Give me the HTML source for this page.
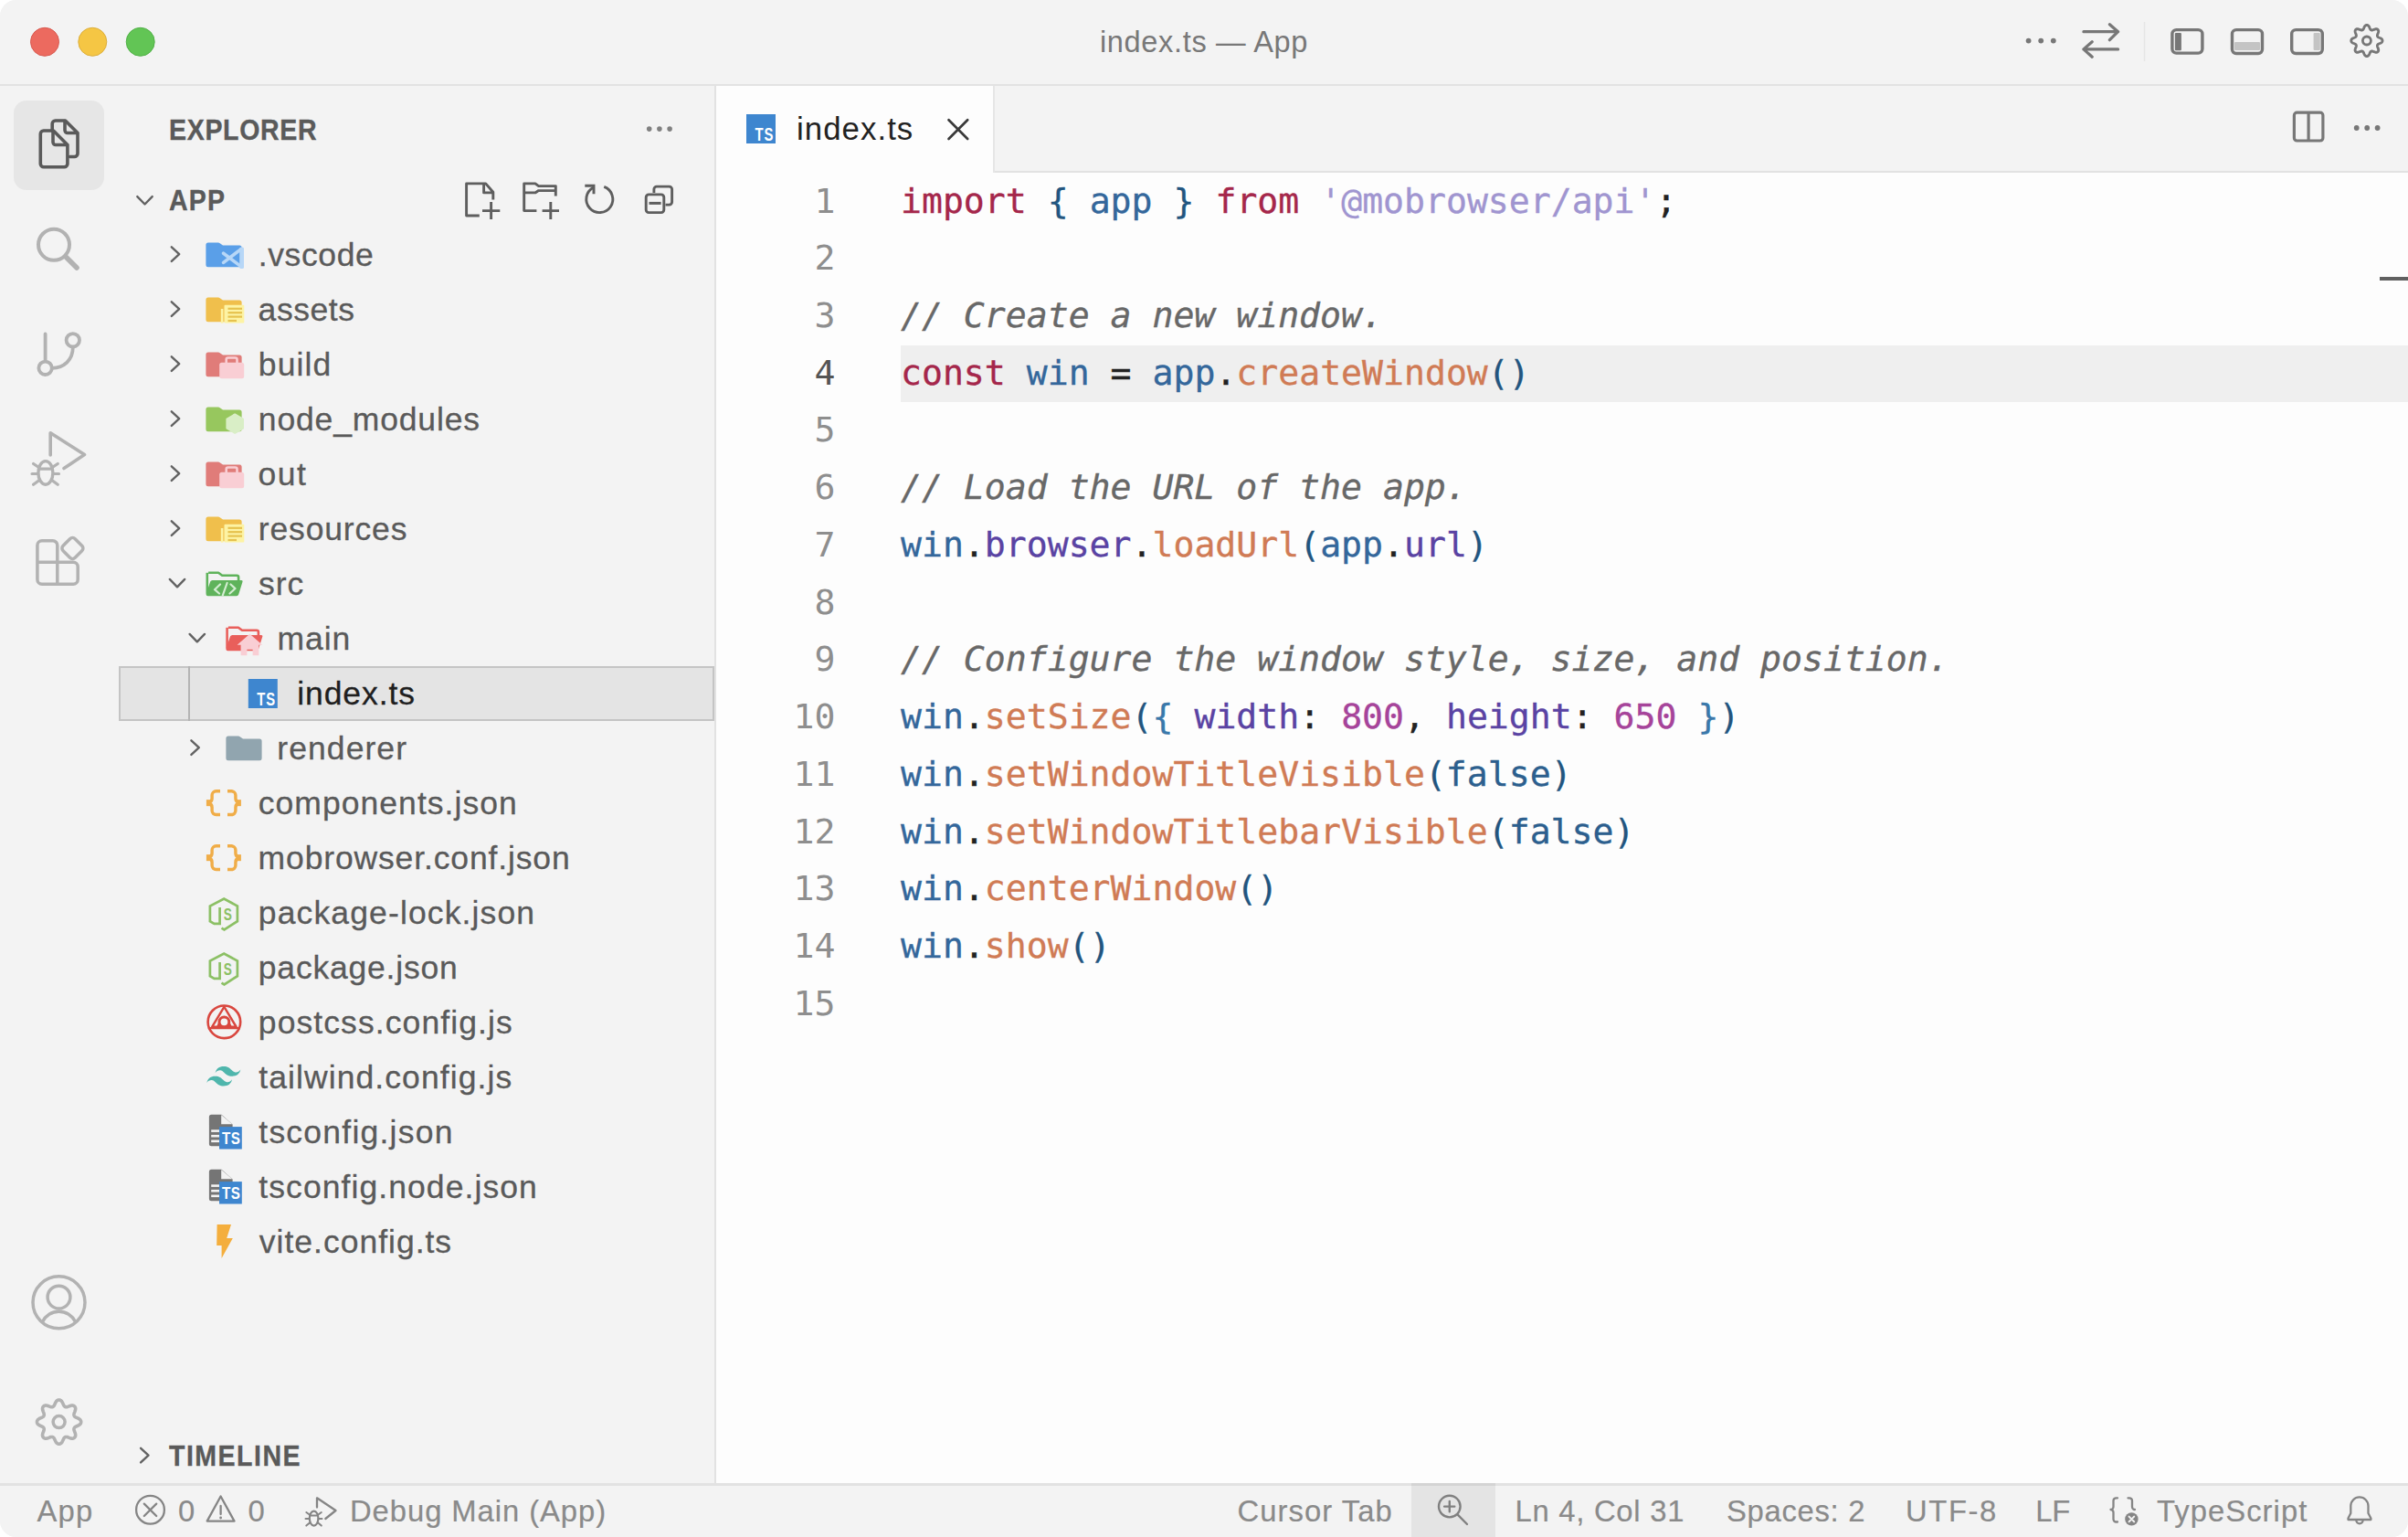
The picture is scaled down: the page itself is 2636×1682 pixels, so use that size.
<!DOCTYPE html>
<html lang="en"><head><meta charset="utf-8"><title>index.ts — App</title>
<style>
html,body{margin:0;padding:0;background:#fff;}
body{width:2636px;height:1682px;overflow:hidden;position:relative;font-family:"Liberation Sans", "DejaVu Sans", sans-serif;}
#win{position:absolute;left:0;top:0;width:2636px;height:1682px;border-radius:18px;overflow:hidden;background:#f3f3f3;}
.abs{position:absolute;}
.t{position:absolute;white-space:pre;}
#titlebar{position:absolute;left:0;top:0;width:2636px;height:92px;background:#f3f3f3;border-bottom:2px solid #e2e2e2;}
#title{left:0;width:2636px;top:0;height:92px;line-height:92px;text-align:center;color:#787878;font-size:32.6px;letter-spacing:0.65px;}
#editor{position:absolute;left:784px;top:94px;width:1852px;height:1529px;background:#fdfdfd;}
#tabbar{position:absolute;left:784px;top:94px;width:1852px;height:93px;background:#f3f3f3;border-bottom:2px solid #e2e2e2;}
#tab{position:absolute;left:784px;top:94px;width:303px;height:95px;background:#fdfdfd;border-right:2px solid #e6e6e6;}
#sideborder{position:absolute;left:782px;top:94px;width:2px;height:1529px;background:#e2e2e2;}
#status{position:absolute;left:0;top:1623px;width:2636px;height:59px;background:#f3f3f3;border-top:3px solid #e2e2e2;box-sizing:border-box;}
.st{position:absolute;white-space:pre;top:1625.5px;height:56px;line-height:56px;font-size:32.8px;color:#8a8a8a;-webkit-text-stroke:0.2px currentColor;}
.row{position:absolute;white-space:pre;height:60.0px;line-height:60.0px;font-size:35.5px;color:#5a5a5a;letter-spacing:0.9px;-webkit-text-stroke:0.3px currentColor;}
.hdr{position:absolute;white-space:pre;font-weight:bold;color:#5a5a5a;font-size:31.7px;transform-origin:0 50%;transform:scaleX(0.9);-webkit-text-stroke:0.35px currentColor;}
.ln{position:absolute;white-space:pre;left:784px;width:130.5px;text-align:right;font-family:"DejaVu Sans Mono", "Liberation Mono", monospace;font-size:38.14px;height:62.73px;line-height:62.73px;color:#8e8e8e;}
.cl{position:absolute;white-space:pre;left:986.0px;font-family:"DejaVu Sans Mono", "Liberation Mono", monospace;font-size:38.14px;height:62.73px;line-height:62.73px;color:#222;-webkit-text-stroke:0.35px currentColor;}
.k{color:#a5274b;} .b1{color:#22557f;} .b2{color:#3a78aa;} .v{color:#34679b;} .s{color:#a095d0;}
.c{color:#686868;font-style:italic;} .f{color:#d07b55;} .p{color:#5a43a3;} .n{color:#a6449a;} .bo{color:#2c5f8e;}
</style></head>
<body>
<div id="win">
<div id="titlebar"></div>
<div class="t" id="title">index.ts — App</div>
<div id="editor"></div><div id="tabbar"></div><div id="tab"></div><div id="sideborder"></div>
<div class="abs" style="left:15px;top:110px;width:99px;height:98px;border-radius:14px;background:#e6e6e6"></div>
<div class="abs" style="left:986px;top:378.19px;width:1650px;height:61.83px;background:#efefef"></div>
<div class="abs" style="left:2605px;top:302.5px;width:31px;height:4.7px;background:#606060"></div>
<div class="t" style="left:872px;top:94px;height:94px;line-height:94px;font-size:34.8px;color:#222;letter-spacing:1.05px">index.ts</div>
<div class="hdr" style="left:185.0px;top:112px;height:60px;line-height:60px;letter-spacing:0.75px">EXPLORER</div>
<div class="hdr" style="left:184.8px;top:188.8px;height:60px;line-height:60px;letter-spacing:1.3px">APP</div>
<div class="hdr" style="left:184.8px;top:1563.2px;height:60px;line-height:60px;letter-spacing:1.65px">TIMELINE</div>
<div class="abs" style="left:130px;top:729px;width:652px;height:60px;box-sizing:border-box;background:#e4e4e4;border:2px solid #c4c4c4"></div>
<div class="abs" style="left:206px;top:729px;width:2px;height:60px;background:#b4b4b4"></div>
<div class="row" style="left:282.8px;top:248.9px;letter-spacing:0.6px;">.vscode</div>
<div class="row" style="left:282.6px;top:308.9px;letter-spacing:0.55px;">assets</div>
<div class="row" style="left:282.8px;top:368.9px;letter-spacing:1.1px;">build</div>
<div class="row" style="left:282.8px;top:428.9px;letter-spacing:0.85px;">node_modules</div>
<div class="row" style="left:282.6px;top:488.9px;letter-spacing:1.4px;">out</div>
<div class="row" style="left:282.8px;top:548.9px;letter-spacing:0.85px;">resources</div>
<div class="row" style="left:283.1px;top:608.9px;letter-spacing:0.9px;">src</div>
<div class="row" style="left:303.6px;top:668.9px;letter-spacing:0.9px;">main</div>
<div class="row" style="left:325.3px;top:728.9px;letter-spacing:0.9px;color:#1f1f1f;">index.ts</div>
<div class="row" style="left:303.3px;top:788.9px;letter-spacing:1.07px;">renderer</div>
<div class="row" style="left:282.8px;top:848.9px;letter-spacing:1.04px;">components.json</div>
<div class="row" style="left:282.6px;top:908.9px;letter-spacing:0.86px;">mobrowser.conf.json</div>
<div class="row" style="left:282.8px;top:968.9px;letter-spacing:1.13px;">package-lock.json</div>
<div class="row" style="left:282.8px;top:1028.9px;letter-spacing:0.8px;">package.json</div>
<div class="row" style="left:282.8px;top:1088.9px;letter-spacing:1.09px;">postcss.config.js</div>
<div class="row" style="left:283.3px;top:1148.9px;letter-spacing:1.08px;">tailwind.config.js</div>
<div class="row" style="left:283.3px;top:1208.9px;letter-spacing:1.23px;">tsconfig.json</div>
<div class="row" style="left:283.3px;top:1268.9px;letter-spacing:1.08px;">tsconfig.node.json</div>
<div class="row" style="left:283.8px;top:1328.9px;letter-spacing:1.0px;">vite.config.ts</div>
<div class="ln" style="top:188.50px;">1</div>
<div class="cl" style="top:188.50px"><span class="k">import</span> <span class="b1">{</span> <span class="v">app</span> <span class="b1">}</span> <span class="k">from</span> <span class="s">'@mobrowser/api'</span>;</div>
<div class="ln" style="top:251.23px;">2</div>
<div class="ln" style="top:313.96px;">3</div>
<div class="cl" style="top:313.96px"><span class="c">// Create a new window.</span></div>
<div class="ln" style="top:376.69px;color:#555;">4</div>
<div class="cl" style="top:376.69px"><span class="k">const</span> <span class="v">win</span> = <span class="v">app</span>.<span class="f">createWindow</span><span class="b1">()</span></div>
<div class="ln" style="top:439.42px;">5</div>
<div class="ln" style="top:502.15px;">6</div>
<div class="cl" style="top:502.15px"><span class="c">// Load the URL of the app.</span></div>
<div class="ln" style="top:564.88px;">7</div>
<div class="cl" style="top:564.88px"><span class="v">win</span>.<span class="p">browser</span>.<span class="f">loadUrl</span><span class="b1">(</span><span class="v">app</span>.<span class="p">url</span><span class="b1">)</span></div>
<div class="ln" style="top:627.61px;">8</div>
<div class="ln" style="top:690.34px;">9</div>
<div class="cl" style="top:690.34px"><span class="c">// Configure the window style, size, and position.</span></div>
<div class="ln" style="top:753.07px;">10</div>
<div class="cl" style="top:753.07px"><span class="v">win</span>.<span class="f">setSize</span><span class="b1">(</span><span class="b2">{</span> <span class="p">width</span>: <span class="n">800</span>, <span class="p">height</span>: <span class="n">650</span> <span class="b2">}</span><span class="b1">)</span></div>
<div class="ln" style="top:815.80px;">11</div>
<div class="cl" style="top:815.80px"><span class="v">win</span>.<span class="f">setWindowTitleVisible</span><span class="b1">(</span><span class="bo">false</span><span class="b1">)</span></div>
<div class="ln" style="top:878.53px;">12</div>
<div class="cl" style="top:878.53px"><span class="v">win</span>.<span class="f">setWindowTitlebarVisible</span><span class="b1">(</span><span class="bo">false</span><span class="b1">)</span></div>
<div class="ln" style="top:941.26px;">13</div>
<div class="cl" style="top:941.26px"><span class="v">win</span>.<span class="f">centerWindow</span><span class="b1">()</span></div>
<div class="ln" style="top:1003.99px;">14</div>
<div class="cl" style="top:1003.99px"><span class="v">win</span>.<span class="f">show</span><span class="b1">()</span></div>
<div class="ln" style="top:1066.72px;">15</div>
<div id="status"></div>
<div class="abs" style="left:1545px;top:1623px;width:92px;height:59px;background:#e4e4e4;border-top:3px solid #d4d4d4;box-sizing:border-box"></div>
<div class="st" style="left:40.5px;letter-spacing:1.15px">App</div>
<div class="st" style="left:195px;letter-spacing:0px">0</div>
<div class="st" style="left:271.5px;letter-spacing:0px">0</div>
<div class="st" style="left:383px;letter-spacing:0.93px">Debug Main (App)</div>
<div class="st" style="left:1354.5px;letter-spacing:1.05px">Cursor Tab</div>
<div class="st" style="left:1658.5px;letter-spacing:0.73px">Ln 4, Col 31</div>
<div class="st" style="left:1890px;letter-spacing:0.69px">Spaces: 2</div>
<div class="st" style="left:2086px;letter-spacing:1.6px">UTF-8</div>
<div class="st" style="left:2228.2px;letter-spacing:-0.3px">LF</div>
<div class="st" style="left:2361px;letter-spacing:1.04px">TypeScript</div>
<svg class="abs" style="left:0;top:0" width="2636" height="1682" viewBox="0 0 2636 1682">
<circle cx="49" cy="45.8" r="15.5" fill="#ec6a5f" stroke="#d85a50" stroke-width="1"/>
<circle cx="101.3" cy="45.8" r="15.5" fill="#f5c644" stroke="#dcae3a" stroke-width="1"/>
<circle cx="153.7" cy="45.8" r="15.5" fill="#62c555" stroke="#50b046" stroke-width="1"/>
<circle cx="2220.6" cy="44.6" r="2.9" fill="#777" stroke="none" stroke-width="0"/>
<circle cx="2234.2" cy="44.6" r="2.9" fill="#777" stroke="none" stroke-width="0"/>
<circle cx="2247.8" cy="44.6" r="2.9" fill="#777" stroke="none" stroke-width="0"/>
<path d="M2280.9 34.7H2318.6M2309.4 26.7L2318.6 34.7L2309.4 43.7" fill="none" stroke="#777" stroke-width="3.2" stroke-linecap="round" stroke-linejoin="round" />
<path d="M2318.6 53.9H2280.9M2290.2 45.7L2280.9 53.9L2290.2 62.3" fill="none" stroke="#777" stroke-width="3.2" stroke-linecap="round" stroke-linejoin="round" />
<rect x="2346.8" y="24" width="1.5" height="43" rx="0" fill="#e6e6e6" stroke="none" stroke-width="0"/>
<rect x="2377.9" y="32.6" width="33" height="25.5" rx="4.5" fill="none" stroke="#777" stroke-width="3.4"/>
<rect x="2380.9" y="36.1" width="7" height="19.2" rx="1" fill="#777" stroke="none" stroke-width="0"/>
<rect x="2443.5" y="32.6" width="33" height="25.9" rx="4.5" fill="none" stroke="#777" stroke-width="3.4"/>
<rect x="2446" y="45.9" width="28" height="9" rx="1" fill="#c4c4c4" stroke="none" stroke-width="0"/>
<rect x="2508.7" y="32.6" width="33.6" height="25.9" rx="4.5" fill="none" stroke="#777" stroke-width="3.4"/>
<rect x="2532.6" y="36" width="7.2" height="19.1" rx="1" fill="#c4c4c4" stroke="none" stroke-width="0"/>
<path d="M2590.90 27.40L2591.35 27.44L2591.79 27.56L2592.22 27.78L2592.62 28.10L2593.00 28.52L2593.35 29.04L2593.66 29.63L2593.93 30.24L2594.18 30.84L2594.42 31.38L2594.65 31.84L2594.89 32.21L2595.15 32.49L2595.43 32.71L2595.72 32.86L2596.04 32.96L2596.38 33.00L2596.77 32.98L2597.20 32.89L2597.69 32.74L2598.24 32.52L2598.84 32.28L2599.47 32.04L2600.10 31.84L2600.71 31.71L2601.28 31.68L2601.79 31.74L2602.25 31.89L2602.65 32.12L2602.99 32.41L2603.28 32.75L2603.51 33.15L2603.66 33.61L2603.72 34.12L2603.69 34.69L2603.56 35.30L2603.36 35.93L2603.12 36.56L2602.88 37.16L2602.66 37.71L2602.51 38.20L2602.42 38.63L2602.40 39.02L2602.44 39.36L2602.54 39.68L2602.69 39.97L2602.91 40.25L2603.19 40.51L2603.56 40.75L2604.02 40.98L2604.56 41.22L2605.16 41.47L2605.77 41.74L2606.36 42.05L2606.88 42.40L2607.30 42.78L2607.62 43.18L2607.84 43.61L2607.96 44.05L2608.00 44.50L2607.96 44.95L2607.84 45.39L2607.62 45.82L2607.30 46.22L2606.88 46.60L2606.36 46.95L2605.77 47.26L2605.16 47.53L2604.56 47.78L2604.02 48.02L2603.56 48.25L2603.19 48.49L2602.91 48.75L2602.69 49.03L2602.54 49.32L2602.44 49.64L2602.40 49.98L2602.42 50.37L2602.51 50.80L2602.66 51.29L2602.88 51.84L2603.12 52.44L2603.36 53.07L2603.56 53.70L2603.69 54.31L2603.72 54.88L2603.66 55.39L2603.51 55.85L2603.28 56.25L2602.99 56.59L2602.65 56.88L2602.25 57.11L2601.79 57.26L2601.28 57.32L2600.71 57.29L2600.10 57.16L2599.47 56.96L2598.84 56.72L2598.24 56.48L2597.69 56.26L2597.20 56.11L2596.77 56.02L2596.38 56.00L2596.04 56.04L2595.72 56.14L2595.43 56.29L2595.15 56.51L2594.89 56.79L2594.65 57.16L2594.42 57.62L2594.18 58.16L2593.93 58.76L2593.66 59.37L2593.35 59.96L2593.00 60.48L2592.62 60.90L2592.22 61.22L2591.79 61.44L2591.35 61.56L2590.90 61.60L2590.45 61.56L2590.01 61.44L2589.58 61.22L2589.18 60.90L2588.80 60.48L2588.45 59.96L2588.14 59.37L2587.87 58.76L2587.62 58.16L2587.38 57.62L2587.15 57.16L2586.91 56.79L2586.65 56.51L2586.37 56.29L2586.08 56.14L2585.76 56.04L2585.42 56.00L2585.03 56.02L2584.60 56.11L2584.11 56.26L2583.56 56.48L2582.96 56.72L2582.33 56.96L2581.70 57.16L2581.09 57.29L2580.52 57.32L2580.01 57.26L2579.55 57.11L2579.15 56.88L2578.81 56.59L2578.52 56.25L2578.29 55.85L2578.14 55.39L2578.08 54.88L2578.11 54.31L2578.24 53.70L2578.44 53.07L2578.68 52.44L2578.92 51.84L2579.14 51.29L2579.29 50.80L2579.38 50.37L2579.40 49.98L2579.36 49.64L2579.26 49.32L2579.11 49.03L2578.89 48.75L2578.61 48.49L2578.24 48.25L2577.78 48.02L2577.24 47.78L2576.64 47.53L2576.03 47.26L2575.44 46.95L2574.92 46.60L2574.50 46.22L2574.18 45.82L2573.96 45.39L2573.84 44.95L2573.80 44.50L2573.84 44.05L2573.96 43.61L2574.18 43.18L2574.50 42.78L2574.92 42.40L2575.44 42.05L2576.03 41.74L2576.64 41.47L2577.24 41.22L2577.78 40.98L2578.24 40.75L2578.61 40.51L2578.89 40.25L2579.11 39.97L2579.26 39.68L2579.36 39.36L2579.40 39.02L2579.38 38.63L2579.29 38.20L2579.14 37.71L2578.92 37.16L2578.68 36.56L2578.44 35.93L2578.24 35.30L2578.11 34.69L2578.08 34.12L2578.14 33.61L2578.29 33.15L2578.52 32.75L2578.81 32.41L2579.15 32.12L2579.55 31.89L2580.01 31.74L2580.52 31.68L2581.09 31.71L2581.70 31.84L2582.33 32.04L2582.96 32.28L2583.56 32.52L2584.11 32.74L2584.60 32.89L2585.03 32.98L2585.42 33.00L2585.76 32.96L2586.08 32.86L2586.37 32.71L2586.65 32.49L2586.91 32.21L2587.15 31.84L2587.38 31.38L2587.62 30.84L2587.87 30.24L2588.14 29.63L2588.45 29.04L2588.80 28.52L2589.18 28.10L2589.58 27.78L2590.01 27.56L2590.45 27.44Z" fill="none" stroke="#777" stroke-width="2.9" stroke-linecap="round" stroke-linejoin="round" />
<circle cx="2590.9" cy="44.5" r="4.5" fill="none" stroke="#777" stroke-width="2.8"/>
<rect x="817" y="125" width="32" height="32" rx="0" fill="#3e86cf" stroke="none" stroke-width="0"/>
<text transform="translate(847.2 153.6) scale(0.76 1)" text-anchor="end" font-family='"Liberation Sans",sans-serif' font-weight="bold" font-size="19.5" fill="#fff" letter-spacing="1.2">TS</text>
<path d="M1038.5 131.3L1059.2 152M1059.2 131.3L1038.5 152" fill="none" stroke="#3a3a3a" stroke-width="2.7" stroke-linecap="round" stroke-linejoin="round" />
<rect x="2511.4" y="123.2" width="31.5" height="30.8" rx="3" fill="none" stroke="#777" stroke-width="3.2"/>
<path d="M2527.1 123.2V154" fill="none" stroke="#777" stroke-width="3.2" stroke-linecap="butt" stroke-linejoin="round" />
<circle cx="2579.7" cy="140" r="2.9" fill="#777" stroke="none" stroke-width="0"/>
<circle cx="2591.2" cy="140" r="2.9" fill="#777" stroke="none" stroke-width="0"/>
<circle cx="2602.6" cy="140" r="2.9" fill="#777" stroke="none" stroke-width="0"/>
<path d="M57.2 143V135.5a3.5 3.5 0 0 1 3.5 -3.5H71.5L85 145.5V168a3.5 3.5 0 0 1 -3.5 3.5H76.5" fill="none" stroke="#5a5a5a" stroke-width="3.6" stroke-linecap="round" stroke-linejoin="round" />
<path d="M71 132.5V142.5a3 3 0 0 0 3 3H84.5" fill="none" stroke="#5a5a5a" stroke-width="3.6" stroke-linecap="round" stroke-linejoin="round" />
<path d="M47.8 143H58.5L73.9 158.4V179.2a3.5 3.5 0 0 1 -3.5 3.5H47.8a3.5 3.5 0 0 1 -3.5 -3.5V146.5a3.5 3.5 0 0 1 3.5 -3.5Z" fill="none" stroke="#5a5a5a" stroke-width="3.6" stroke-linecap="round" stroke-linejoin="round" />
<path d="M58 143.5V155.5a3 3 0 0 0 3 3H73.5" fill="none" stroke="#5a5a5a" stroke-width="3.6" stroke-linecap="round" stroke-linejoin="round" />
<circle cx="59" cy="267.8" r="17" fill="none" stroke="#b2b2b2" stroke-width="4"/>
<path d="M72 281L84 293" fill="none" stroke="#b2b2b2" stroke-width="5.6" stroke-linecap="round" stroke-linejoin="round" />
<path d="M49.6 365.5V394" fill="none" stroke="#b2b2b2" stroke-width="3.8" stroke-linecap="round" stroke-linejoin="round" />
<circle cx="49.6" cy="402.8" r="7.2" fill="none" stroke="#b2b2b2" stroke-width="3.8"/>
<circle cx="79.8" cy="372.3" r="7.2" fill="none" stroke="#b2b2b2" stroke-width="3.8"/>
<path d="M79.8 380C79.8 394 70 402.5 57 402.8" fill="none" stroke="#b2b2b2" stroke-width="3.8" stroke-linecap="round" stroke-linejoin="round" />
<path d="M55.2 498V473.8L92.5 497.6L70 512.5" fill="none" stroke="#b2b2b2" stroke-width="3.6" stroke-linecap="round" stroke-linejoin="round" />
<ellipse cx="49.9" cy="517.4" rx="8" ry="12.8" fill="none" stroke="#b2b2b2" stroke-width="3.4"/>
<path d="M42.5 513.2H57.3" fill="none" stroke="#b2b2b2" stroke-width="3.2" stroke-linecap="round" stroke-linejoin="round" />
<path d="M35 518.5H41.5M58.3 518.5H64.5M36.6 507.5L42.5 511.5M63.2 507.5L57.3 511.5M36.6 530.3L43 525.5M63.2 530.3L56.8 525.5" fill="none" stroke="#b2b2b2" stroke-width="3.2" stroke-linecap="round" stroke-linejoin="round" />
<path d="M62.8 597V639.2M40.9 615.3H62.8M45.9 591.7H57.8a5 5 0 0 1 5 5V615.3H80.2a5 5 0 0 1 5 5V634.2a5 5 0 0 1 -5 5H45.9a5 5 0 0 1 -5 -5V596.7a5 5 0 0 1 5 -5Z" fill="none" stroke="#b2b2b2" stroke-width="3.5" stroke-linecap="round" stroke-linejoin="round" />
<rect x="-9.3" y="-9.3" width="18.6" height="18.6" rx="4" transform="translate(79.4 600) rotate(45)" fill="none" stroke="#b2b2b2" stroke-width="3.5"/>
<circle cx="64.5" cy="1425.3" r="28.5" fill="none" stroke="#b2b2b2" stroke-width="3.5"/>
<circle cx="64.5" cy="1419.6" r="12.4" fill="none" stroke="#b2b2b2" stroke-width="3.5"/>
<path d="M46.5 1446.5A20 20 0 0 1 82.5 1446.5" fill="none" stroke="#b2b2b2" stroke-width="3.5" stroke-linecap="round" stroke-linejoin="round" />
<path d="M64.60 1532.00L65.23 1532.05L65.85 1532.22L66.46 1532.52L67.03 1532.96L67.57 1533.55L68.06 1534.27L68.50 1535.08L68.89 1535.93L69.25 1536.75L69.58 1537.50L69.92 1538.14L70.27 1538.65L70.64 1539.05L71.03 1539.35L71.45 1539.56L71.90 1539.71L72.39 1539.77L72.93 1539.75L73.54 1539.64L74.23 1539.42L75.00 1539.13L75.83 1538.80L76.71 1538.48L77.59 1538.22L78.45 1538.06L79.24 1538.02L79.96 1538.11L80.60 1538.33L81.16 1538.65L81.64 1539.06L82.05 1539.54L82.37 1540.10L82.59 1540.74L82.68 1541.46L82.64 1542.25L82.48 1543.11L82.22 1543.99L81.90 1544.87L81.57 1545.70L81.28 1546.47L81.06 1547.16L80.95 1547.77L80.93 1548.31L80.99 1548.80L81.14 1549.25L81.35 1549.67L81.65 1550.06L82.05 1550.43L82.56 1550.78L83.20 1551.12L83.95 1551.45L84.77 1551.81L85.62 1552.20L86.43 1552.64L87.15 1553.13L87.74 1553.67L88.18 1554.24L88.48 1554.85L88.65 1555.47L88.70 1556.10L88.65 1556.73L88.48 1557.35L88.18 1557.96L87.74 1558.53L87.15 1559.07L86.43 1559.56L85.62 1560.00L84.77 1560.39L83.95 1560.75L83.20 1561.08L82.56 1561.42L82.05 1561.77L81.65 1562.14L81.35 1562.53L81.14 1562.95L80.99 1563.40L80.93 1563.89L80.95 1564.43L81.06 1565.04L81.28 1565.73L81.57 1566.50L81.90 1567.33L82.22 1568.21L82.48 1569.09L82.64 1569.95L82.68 1570.74L82.59 1571.46L82.37 1572.10L82.05 1572.66L81.64 1573.14L81.16 1573.55L80.60 1573.87L79.96 1574.09L79.24 1574.18L78.45 1574.14L77.59 1573.98L76.71 1573.72L75.83 1573.40L75.00 1573.07L74.23 1572.78L73.54 1572.56L72.93 1572.45L72.39 1572.43L71.90 1572.49L71.45 1572.64L71.03 1572.85L70.64 1573.15L70.27 1573.55L69.92 1574.06L69.58 1574.70L69.25 1575.45L68.89 1576.27L68.50 1577.12L68.06 1577.93L67.57 1578.65L67.03 1579.24L66.46 1579.68L65.85 1579.98L65.23 1580.15L64.60 1580.20L63.97 1580.15L63.35 1579.98L62.74 1579.68L62.17 1579.24L61.63 1578.65L61.14 1577.93L60.70 1577.12L60.31 1576.27L59.95 1575.45L59.62 1574.70L59.28 1574.06L58.93 1573.55L58.56 1573.15L58.17 1572.85L57.75 1572.64L57.30 1572.49L56.81 1572.43L56.27 1572.45L55.66 1572.56L54.97 1572.78L54.20 1573.07L53.37 1573.40L52.49 1573.72L51.61 1573.98L50.75 1574.14L49.96 1574.18L49.24 1574.09L48.60 1573.87L48.04 1573.55L47.56 1573.14L47.15 1572.66L46.83 1572.10L46.61 1571.46L46.52 1570.74L46.56 1569.95L46.72 1569.09L46.98 1568.21L47.30 1567.33L47.63 1566.50L47.92 1565.73L48.14 1565.04L48.25 1564.43L48.27 1563.89L48.21 1563.40L48.06 1562.95L47.85 1562.53L47.55 1562.14L47.15 1561.77L46.64 1561.42L46.00 1561.08L45.25 1560.75L44.43 1560.39L43.58 1560.00L42.77 1559.56L42.05 1559.07L41.46 1558.53L41.02 1557.96L40.72 1557.35L40.55 1556.73L40.50 1556.10L40.55 1555.47L40.72 1554.85L41.02 1554.24L41.46 1553.67L42.05 1553.13L42.77 1552.64L43.58 1552.20L44.43 1551.81L45.25 1551.45L46.00 1551.12L46.64 1550.78L47.15 1550.43L47.55 1550.06L47.85 1549.67L48.06 1549.25L48.21 1548.80L48.27 1548.31L48.25 1547.77L48.14 1547.16L47.92 1546.47L47.63 1545.70L47.30 1544.87L46.98 1543.99L46.72 1543.11L46.56 1542.25L46.52 1541.46L46.61 1540.74L46.83 1540.10L47.15 1539.54L47.56 1539.06L48.04 1538.65L48.60 1538.33L49.24 1538.11L49.96 1538.02L50.75 1538.06L51.61 1538.22L52.49 1538.48L53.37 1538.80L54.20 1539.13L54.97 1539.42L55.66 1539.64L56.27 1539.75L56.81 1539.77L57.30 1539.71L57.75 1539.56L58.17 1539.35L58.56 1539.05L58.93 1538.65L59.28 1538.14L59.62 1537.50L59.95 1536.75L60.31 1535.93L60.70 1535.08L61.14 1534.27L61.63 1533.55L62.17 1532.96L62.74 1532.52L63.35 1532.22L63.97 1532.05Z" fill="none" stroke="#b2b2b2" stroke-width="3.6" stroke-linecap="round" stroke-linejoin="round" />
<circle cx="64.6" cy="1556.1" r="6.5" fill="none" stroke="#b2b2b2" stroke-width="3.5"/>
<circle cx="710.7" cy="141.1" r="2.8" fill="#808080" stroke="none" stroke-width="0"/>
<circle cx="721.9" cy="141.1" r="2.8" fill="#808080" stroke="none" stroke-width="0"/>
<circle cx="733.1" cy="141.1" r="2.8" fill="#808080" stroke="none" stroke-width="0"/>
<path d="M524.8 236H510.6V200.9H531.7L539.8 210.3V218.4M529.6 200.9V210.9H539.8" fill="none" stroke="#5e5e5e" stroke-width="2.9" stroke-linecap="butt" stroke-linejoin="round" />
<path d="M528 230.6H547.3M537.6 221.1V240" fill="none" stroke="#5e5e5e" stroke-width="2.9" stroke-linecap="butt" stroke-linejoin="round" />
<path d="M587.4 230.6H573.7V200.9H585.9L589.6 203.6H608.3V214.6M573.7 210.9H585.9L589.6 208.6H608.3" fill="none" stroke="#5e5e5e" stroke-width="2.9" stroke-linecap="butt" stroke-linejoin="round" />
<path d="M593.6 230.6H612M602.8 221.1V240" fill="none" stroke="#5e5e5e" stroke-width="2.9" stroke-linecap="butt" stroke-linejoin="round" />
<path d="M661.26 204.47A14.5 14.5 0 1 1 649.49 205.30" fill="none" stroke="#5e5e5e" stroke-width="2.9" stroke-linecap="butt" stroke-linejoin="round" />
<path d="M640.3 203.3H650V212.2" fill="none" stroke="#5e5e5e" stroke-width="2.9" stroke-linecap="butt" stroke-linejoin="miter" />
<path d="M715.9 211V207.1a3 3 0 0 1 3 -3H732.6a3 3 0 0 1 3 3V221.1a3 3 0 0 1 -3 3H728.5" fill="none" stroke="#5e5e5e" stroke-width="2.9" stroke-linecap="butt" stroke-linejoin="round" />
<rect x="707.2" y="212.9" width="19.6" height="19.7" rx="3" fill="none" stroke="#5e5e5e" stroke-width="2.9"/>
<path d="M710.5 222.4H723.6" fill="none" stroke="#5e5e5e" stroke-width="3.0" stroke-linecap="butt" stroke-linejoin="round" />
<path d="M150.3 215.10000000000002L158.5 223.5L166.7 215.10000000000002" fill="none" stroke="#626262" stroke-width="2.4" stroke-linecap="round" stroke-linejoin="round" />
<path d="M154.10000000000002 1584.8L162.5 1592.6L154.10000000000002 1600.3999999999999" fill="none" stroke="#626262" stroke-width="2.4" stroke-linecap="round" stroke-linejoin="round" />
<path d="M187.8 270.29999999999995L196.2 278.09999999999997L187.8 285.9" fill="none" stroke="#626262" stroke-width="2.4" stroke-linecap="round" stroke-linejoin="round" />
<path d="M187.8 330.29999999999995L196.2 338.09999999999997L187.8 345.9" fill="none" stroke="#626262" stroke-width="2.4" stroke-linecap="round" stroke-linejoin="round" />
<path d="M187.8 390.29999999999995L196.2 398.09999999999997L187.8 405.9" fill="none" stroke="#626262" stroke-width="2.4" stroke-linecap="round" stroke-linejoin="round" />
<path d="M187.8 450.29999999999995L196.2 458.09999999999997L187.8 465.9" fill="none" stroke="#626262" stroke-width="2.4" stroke-linecap="round" stroke-linejoin="round" />
<path d="M187.8 510.3L196.2 518.1L187.8 525.9" fill="none" stroke="#626262" stroke-width="2.4" stroke-linecap="round" stroke-linejoin="round" />
<path d="M187.8 570.3000000000001L196.2 578.1L187.8 585.9" fill="none" stroke="#626262" stroke-width="2.4" stroke-linecap="round" stroke-linejoin="round" />
<path d="M185.8 633.9L194 642.3000000000001L202.2 633.9" fill="none" stroke="#626262" stroke-width="2.4" stroke-linecap="round" stroke-linejoin="round" />
<path d="M207.60000000000002 693.9L215.8 702.3000000000001L224.0 693.9" fill="none" stroke="#626262" stroke-width="2.4" stroke-linecap="round" stroke-linejoin="round" />
<path d="M209.4 810.3000000000001L217.79999999999998 818.1L209.4 825.9" fill="none" stroke="#626262" stroke-width="2.4" stroke-linecap="round" stroke-linejoin="round" />
<path d="M227.9 265.59999999999997H238.9a2.5 2.5 0 0 1 1.8 0.7L244.0 268.59999999999997H262.1a2.5 2.5 0 0 1 2.5 2.5V289.7a2.5 2.5 0 0 1 -2.5 2.5H227.9a2.5 2.5 0 0 1 -2.5 -2.5V268.09999999999997a2.5 2.5 0 0 1 2.5 -2.5Z" fill="#5a9fe8"/>
<rect x="262.2" y="270.3999999999999" width="4.8" height="23.6" rx="1.6" fill="#b7d7f7" stroke="none" stroke-width="0"/>
<path d="M263.5 272.79999999999995L244.6 287.3999999999999M263.5 291.3999999999999L244.6 277.19999999999993" fill="none" stroke="#b7d7f7" stroke-width="3.6" stroke-linecap="round"/>
<path d="M227.9 325.59999999999997H238.9a2.5 2.5 0 0 1 1.8 0.7L244.0 328.59999999999997H262.1a2.5 2.5 0 0 1 2.5 2.5V349.7a2.5 2.5 0 0 1 -2.5 2.5H227.9a2.5 2.5 0 0 1 -2.5 -2.5V328.09999999999997a2.5 2.5 0 0 1 2.5 -2.5Z" fill="#f0bf4c"/>
<rect x="245.5" y="333.79999999999995" width="21.8" height="19.8" rx="1" fill="#fdf3a4" stroke="none" stroke-width="0"/>
<rect x="241.8" y="337.99999999999994" width="2.6" height="15.6" rx="0" fill="#fdf3a4" stroke="none" stroke-width="0"/>
<rect x="249.5" y="336.69999999999993" width="15.5" height="2.2" rx="0" fill="#e6c24e" stroke="none" stroke-width="0"/>
<rect x="249.5" y="341.0999999999999" width="15.5" height="2.2" rx="0" fill="#e6c24e" stroke="none" stroke-width="0"/>
<rect x="249.5" y="345.49999999999994" width="15.5" height="2.2" rx="0" fill="#e6c24e" stroke="none" stroke-width="0"/>
<rect x="249.5" y="349.8999999999999" width="9.5" height="2.2" rx="0" fill="#e6c24e" stroke="none" stroke-width="0"/>
<path d="M227.9 565.6H238.9a2.5 2.5 0 0 1 1.8 0.7L244.0 568.6H262.1a2.5 2.5 0 0 1 2.5 2.5V589.7a2.5 2.5 0 0 1 -2.5 2.5H227.9a2.5 2.5 0 0 1 -2.5 -2.5V568.1a2.5 2.5 0 0 1 2.5 -2.5Z" fill="#f0bf4c"/>
<rect x="245.5" y="573.8" width="21.8" height="19.8" rx="1" fill="#fdf3a4" stroke="none" stroke-width="0"/>
<rect x="241.8" y="578.0" width="2.6" height="15.6" rx="0" fill="#fdf3a4" stroke="none" stroke-width="0"/>
<rect x="249.5" y="576.7" width="15.5" height="2.2" rx="0" fill="#e6c24e" stroke="none" stroke-width="0"/>
<rect x="249.5" y="581.1" width="15.5" height="2.2" rx="0" fill="#e6c24e" stroke="none" stroke-width="0"/>
<rect x="249.5" y="585.5" width="15.5" height="2.2" rx="0" fill="#e6c24e" stroke="none" stroke-width="0"/>
<rect x="249.5" y="589.9000000000001" width="9.5" height="2.2" rx="0" fill="#e6c24e" stroke="none" stroke-width="0"/>
<path d="M227.9 385.59999999999997H238.9a2.5 2.5 0 0 1 1.8 0.7L244.0 388.59999999999997H262.1a2.5 2.5 0 0 1 2.5 2.5V409.7a2.5 2.5 0 0 1 -2.5 2.5H227.9a2.5 2.5 0 0 1 -2.5 -2.5V388.09999999999997a2.5 2.5 0 0 1 2.5 -2.5Z" fill="#e07c79"/>
<rect x="240.2" y="396.69999999999993" width="27" height="17.6" rx="2.5" fill="#f9ced4" stroke="none" stroke-width="0"/>
<path d="M247.7 396.99999999999994V393.49999999999994a2 2 0 0 1 2 -2H257.5a2 2 0 0 1 2 2V396.99999999999994" fill="none" stroke="#f9ced4" stroke-width="2.6"/>
<path d="M227.9 505.6H238.9a2.5 2.5 0 0 1 1.8 0.7L244.0 508.6H262.1a2.5 2.5 0 0 1 2.5 2.5V529.7a2.5 2.5 0 0 1 -2.5 2.5H227.9a2.5 2.5 0 0 1 -2.5 -2.5V508.1a2.5 2.5 0 0 1 2.5 -2.5Z" fill="#e07c79"/>
<rect x="240.2" y="516.7" width="27" height="17.6" rx="2.5" fill="#f9ced4" stroke="none" stroke-width="0"/>
<path d="M247.7 517.0V513.5a2 2 0 0 1 2 -2H257.5a2 2 0 0 1 2 2V517.0" fill="none" stroke="#f9ced4" stroke-width="2.6"/>
<path d="M227.9 445.59999999999997H238.9a2.5 2.5 0 0 1 1.8 0.7L244.0 448.59999999999997H262.1a2.5 2.5 0 0 1 2.5 2.5V469.7a2.5 2.5 0 0 1 -2.5 2.5H227.9a2.5 2.5 0 0 1 -2.5 -2.5V448.09999999999997a2.5 2.5 0 0 1 2.5 -2.5Z" fill="#97c75e"/>
<path d="M257.2 453.4L266.0 458.5L266.0 468.7L257.2 473.8L248.4 468.7L248.4 458.5Z" fill="#d9eec6" stroke="#d9eec6" stroke-width="2" stroke-linejoin="round"/>
<path d="M228.1 626.8000000000001H239.1L243.2 629.8000000000001H259.1a2 2 0 0 1 2 2V635.1" fill="none" stroke="#5fb35b" stroke-width="2.6" stroke-linejoin="round"/>
<path d="M226.79999999999998 626.8000000000001V649.6" stroke="#5fb35b" stroke-width="2.6" fill="none"/>
<path d="M232.6 634.9H264.0a1.5 1.5 0 0 1 1.4 2L261.2 650.6a2.5 2.5 0 0 1 -2.3 1.7H227.6a2 2 0 0 1 -1.9 -2.6L230.2 636.6a2.5 2.5 0 0 1 2.4 -1.7Z" fill="#5fb35b"/>
<path d="M241 639.5L235 645.2L240 649.5M252.5 639.5L257.5 644.0L251.5 649.5M248.6 638.0L243.8 651.5" fill="none" stroke="#d4edd2" stroke-width="2.2" stroke-linecap="round" stroke-linejoin="round"/>
<path d="M249.9 686.8000000000001H260.9L265.0 689.8000000000001H280.9a2 2 0 0 1 2 2V695.1" fill="none" stroke="#e95f5b" stroke-width="2.6" stroke-linejoin="round"/>
<path d="M248.6 686.8000000000001V709.6" stroke="#e95f5b" stroke-width="2.6" fill="none"/>
<path d="M254.4 694.9H285.8a1.5 1.5 0 0 1 1.4 2L283.0 710.6a2.5 2.5 0 0 1 -2.3 1.7H249.4a2 2 0 0 1 -1.9 -2.6L252.0 696.6a2.5 2.5 0 0 1 2.4 -1.7Z" fill="#e95f5b"/>
<path d="M273.4 693.8L287.3 705.8H283.3V717.3H276.6V710.8H270.4V717.3H263.6V705.8H259.6Z" fill="#f9ced4"/>
<path d="M249.9 805.6H260.9a2.5 2.5 0 0 1 1.8 0.7L266.0 808.6H284.1a2.5 2.5 0 0 1 2.5 2.5V829.7a2.5 2.5 0 0 1 -2.5 2.5H249.9a2.5 2.5 0 0 1 -2.5 -2.5V808.1a2.5 2.5 0 0 1 2.5 -2.5Z" fill="#91a5af"/>
<rect x="271.8" y="743" width="32" height="32" rx="0" fill="#3e86cf" stroke="none" stroke-width="0"/>
<text transform="translate(302 771.6) scale(0.76 1)" text-anchor="end" font-family='"Liberation Sans",sans-serif' font-weight="bold" font-size="19.5" fill="#fff" letter-spacing="1.2">TS</text>
<path d="M241 865.8H236.6a4.5 4.5 0 0 0 -4.5 4.5V873.65c0 2.6 -1.6 4.2 -4 4.6M241 891.5H236.6a4.5 4.5 0 0 1 -4.5 -4.5V883.65c0 -2.6 -1.6 -4.2 -4 -4.6" fill="none" stroke="#f0ad48" stroke-width="3.4"/>
<rect x="225.9" y="875.15" width="4.6" height="7" rx="0" fill="#f0ad48" stroke="none" stroke-width="0"/>
<path d="M249 865.8H253.4a4.5 4.5 0 0 1 4.5 4.5V873.65c0 2.6 1.6 4.2 4 4.6M249 891.5H253.4a4.5 4.5 0 0 0 4.5 -4.5V883.65c0 -2.6 1.6 -4.2 4 -4.6" fill="none" stroke="#f0ad48" stroke-width="3.4"/>
<rect x="259.5" y="875.15" width="4.4" height="7" rx="0" fill="#f0ad48" stroke="none" stroke-width="0"/>
<path d="M241 925.8H236.6a4.5 4.5 0 0 0 -4.5 4.5V933.65c0 2.6 -1.6 4.2 -4 4.6M241 951.5H236.6a4.5 4.5 0 0 1 -4.5 -4.5V943.65c0 -2.6 -1.6 -4.2 -4 -4.6" fill="none" stroke="#f0ad48" stroke-width="3.4"/>
<rect x="225.9" y="935.15" width="4.6" height="7" rx="0" fill="#f0ad48" stroke="none" stroke-width="0"/>
<path d="M249 925.8H253.4a4.5 4.5 0 0 1 4.5 4.5V933.65c0 2.6 1.6 4.2 4 4.6M249 951.5H253.4a4.5 4.5 0 0 0 4.5 -4.5V943.65c0 -2.6 1.6 -4.2 4 -4.6" fill="none" stroke="#f0ad48" stroke-width="3.4"/>
<rect x="259.5" y="935.15" width="4.4" height="7" rx="0" fill="#f0ad48" stroke="none" stroke-width="0"/>
<path d="M240.6 993.0V1010.9H234.5L229.9 1008.2V991.5L245.2 983.6L259.9 991.5V1008.2L245.5 1017.4L242.5 1015.6" fill="none" stroke="#8cc065" stroke-width="2.7" stroke-linejoin="miter" stroke-linecap="butt"/>
<text transform="translate(249.3 1006.7) scale(0.76 1)" text-anchor="middle" font-family='"Liberation Sans",sans-serif' font-weight="bold" font-size="18" fill="#8cc065">S</text>
<path d="M240.6 1053.0000000000002V1070.9H234.5L229.9 1068.2V1051.5000000000002L245.2 1043.6000000000001L259.9 1051.5000000000002V1068.2L245.5 1077.4L242.5 1075.6000000000001" fill="none" stroke="#8cc065" stroke-width="2.7" stroke-linejoin="miter" stroke-linecap="butt"/>
<text transform="translate(249.3 1066.7) scale(0.76 1)" text-anchor="middle" font-family='"Liberation Sans",sans-serif' font-weight="bold" font-size="18" fill="#8cc065">S</text>
<circle cx="245.4" cy="1118.3000000000002" r="17.8" fill="none" stroke="#d9473f" stroke-width="2.6"/>
<path d="M245.4 1101.8000000000002L258.6 1123.7000000000003H232.2Z M227.8 1125.1000000000001H263" fill="none" stroke="#d9473f" stroke-width="2.4" stroke-linejoin="round"/>
<path d="M237 1123.7000000000003L240.5 1115.3000000000002H250.3L253.8 1123.7000000000003Z" fill="#d9473f"/>
<circle cx="245.4" cy="1118.3000000000002" r="5.4" fill="#f3f3f3" stroke="#d9473f" stroke-width="3"/>
<path transform="translate(226.3 1167.0000000000002) scale(0.687 0.664)" d="M27 0c-7.2 0-11.7 3.6-13.5 10.8 2.7-3.6 5.85-4.95 9.45-4.05 2.054.513 3.522 2.004 5.147 3.653C30.744 13.09 33.808 16.2 40.5 16.2c7.2 0 11.7-3.6 13.5-10.8-2.7 3.6-5.85 4.95-9.45 4.05-2.054-.513-3.522-2.004-5.147-3.653C36.756 3.11 33.692 0 27 0zM13.5 16.2C6.3 16.2 1.8 19.8 0 27c2.7-3.6 5.85-4.95 9.45-4.05 2.054.514 3.522 2.004 5.147 3.653C17.244 29.29 20.308 32.4 27 32.4c7.2 0 11.7-3.6 13.5-10.8-2.7 3.6-5.85 4.95-9.45 4.05-2.054-.513-3.522-2.004-5.147-3.653C23.256 19.31 20.192 16.2 13.5 16.2z" fill="#4fb6ac"/>
<path d="M231.9 1219.8000000000002H242.5L254.6 1230.6000000000001V1251.7a2.5 2.5 0 0 1 -2.5 2.5H231.4a2.5 2.5 0 0 1 -2.5 -2.5V1222.3000000000002a2.5 2.5 0 0 1 2.5 -2.5Z" fill="#757575"/>
<path d="M242.2 1220.1000000000001V1230.3000000000002H254.3Z" fill="#f3f3f3"/>
<rect x="231.2" y="1236.3000000000002" width="9.5" height="2.6" rx="0" fill="#f3f3f3" stroke="none" stroke-width="0"/>
<rect x="231.2" y="1241.9" width="9.5" height="2.6" rx="0" fill="#f3f3f3" stroke="none" stroke-width="0"/>
<rect x="231.2" y="1247.5000000000002" width="9.5" height="2.6" rx="0" fill="#f3f3f3" stroke="none" stroke-width="0"/>
<rect x="240" y="1233.1000000000001" width="24.8" height="24.4" rx="0" fill="#3e86cf" stroke="none" stroke-width="0"/>
<text transform="translate(253.2 1252.1000000000001) scale(0.86 1)" text-anchor="middle" font-family='"Liberation Sans",sans-serif' font-weight="bold" font-size="17.7" fill="#fff" letter-spacing="0.6">TS</text>
<path d="M231.9 1279.8000000000002H242.5L254.6 1290.6000000000001V1311.7a2.5 2.5 0 0 1 -2.5 2.5H231.4a2.5 2.5 0 0 1 -2.5 -2.5V1282.3000000000002a2.5 2.5 0 0 1 2.5 -2.5Z" fill="#757575"/>
<path d="M242.2 1280.1000000000001V1290.3000000000002H254.3Z" fill="#f3f3f3"/>
<rect x="231.2" y="1296.3000000000002" width="9.5" height="2.6" rx="0" fill="#f3f3f3" stroke="none" stroke-width="0"/>
<rect x="231.2" y="1301.9" width="9.5" height="2.6" rx="0" fill="#f3f3f3" stroke="none" stroke-width="0"/>
<rect x="231.2" y="1307.5000000000002" width="9.5" height="2.6" rx="0" fill="#f3f3f3" stroke="none" stroke-width="0"/>
<rect x="240" y="1293.1000000000001" width="24.8" height="24.4" rx="0" fill="#3e86cf" stroke="none" stroke-width="0"/>
<text transform="translate(253.2 1312.1000000000001) scale(0.86 1)" text-anchor="middle" font-family='"Liberation Sans",sans-serif' font-weight="bold" font-size="17.7" fill="#fff" letter-spacing="0.6">TS</text>
<path d="M237.6 1340.1000000000001H253L248.2 1355.1000000000001H254.8L242.6 1377.1000000000001V1363.1000000000001H237.2Z" fill="#f4ae3d"/>
<circle cx="164.5" cy="1652.2" r="15.4" fill="none" stroke="#858585" stroke-width="2.3"/>
<path d="M157.8 1645.6L171.2 1659M171.2 1645.6L157.8 1659" fill="none" stroke="#858585" stroke-width="2.3" stroke-linecap="round" stroke-linejoin="round" />
<path d="M241.6 1637.5L256.5 1664.6H226.7Z" fill="none" stroke="#858585" stroke-width="2.3" stroke-linecap="round" stroke-linejoin="round" />
<path d="M241.6 1648V1657" fill="none" stroke="#858585" stroke-width="2.3" stroke-linecap="round" stroke-linejoin="round" />
<circle cx="241.6" cy="1661" r="1.4" fill="#858585" stroke="none" stroke-width="0"/>
<path d="M347 1649.5V1639.3L367.5 1653L356.3 1662" fill="none" stroke="#858585" stroke-width="2.3" stroke-linecap="round" stroke-linejoin="round" />
<ellipse cx="343.6" cy="1661.6" rx="4.8" ry="8" fill="none" stroke="#858585" stroke-width="2.2"/>
<path d="M339.5 1658.5H347.7M334.5 1662H338.5M348.7 1662H352.5M335.3 1655L338.8 1657.5M351.8 1655L348.4 1657.5M335.3 1669.6L339 1666.5M351.8 1669.6L348.2 1666.5" fill="none" stroke="#858585" stroke-width="2" stroke-linecap="round" stroke-linejoin="round" />
<circle cx="1586.8" cy="1648.6" r="11.8" fill="none" stroke="#808080" stroke-width="2.4"/>
<path d="M1581.1 1648.6H1592.3M1586.8 1643V1654.2M1595.5 1657.4L1606 1668" fill="none" stroke="#808080" stroke-width="2.4" stroke-linecap="round" stroke-linejoin="round" />
<path d="M2318 1639.3H2316.5a3 3 0 0 0 -3 3V1649a3 3 0 0 1 -3 3a3 3 0 0 1 3 3V1662.5a3 3 0 0 0 3 3H2318" fill="none" stroke="#858585" stroke-width="2.3" stroke-linecap="round" stroke-linejoin="round" />
<path d="M2329.5 1639.3H2331a3 3 0 0 1 3 3V1649a3 3 0 0 0 3 3" fill="none" stroke="#858585" stroke-width="2.3" stroke-linecap="round" stroke-linejoin="round" />
<circle cx="2333.4" cy="1662.4" r="7.2" fill="#858585" stroke="none" stroke-width="0"/>
<path d="M2330.6 1659.6L2336.2 1665.2M2336.2 1659.6L2330.6 1665.2" fill="none" stroke="#f3f3f3" stroke-width="2" stroke-linecap="round" stroke-linejoin="round" />
<path d="M2570.5 1663V1661.5L2573.3 1656V1648a9.6 9.6 0 0 1 19.2 0V1656L2595.4 1661.5V1663Z" fill="none" stroke="#858585" stroke-width="2.3" stroke-linecap="round" stroke-linejoin="round" />
<path d="M2579.3 1663.6a3.7 3.7 0 0 0 7.4 0" fill="none" stroke="#858585" stroke-width="2.3" stroke-linecap="round" stroke-linejoin="round" />
</svg>
</div>
</body></html>
